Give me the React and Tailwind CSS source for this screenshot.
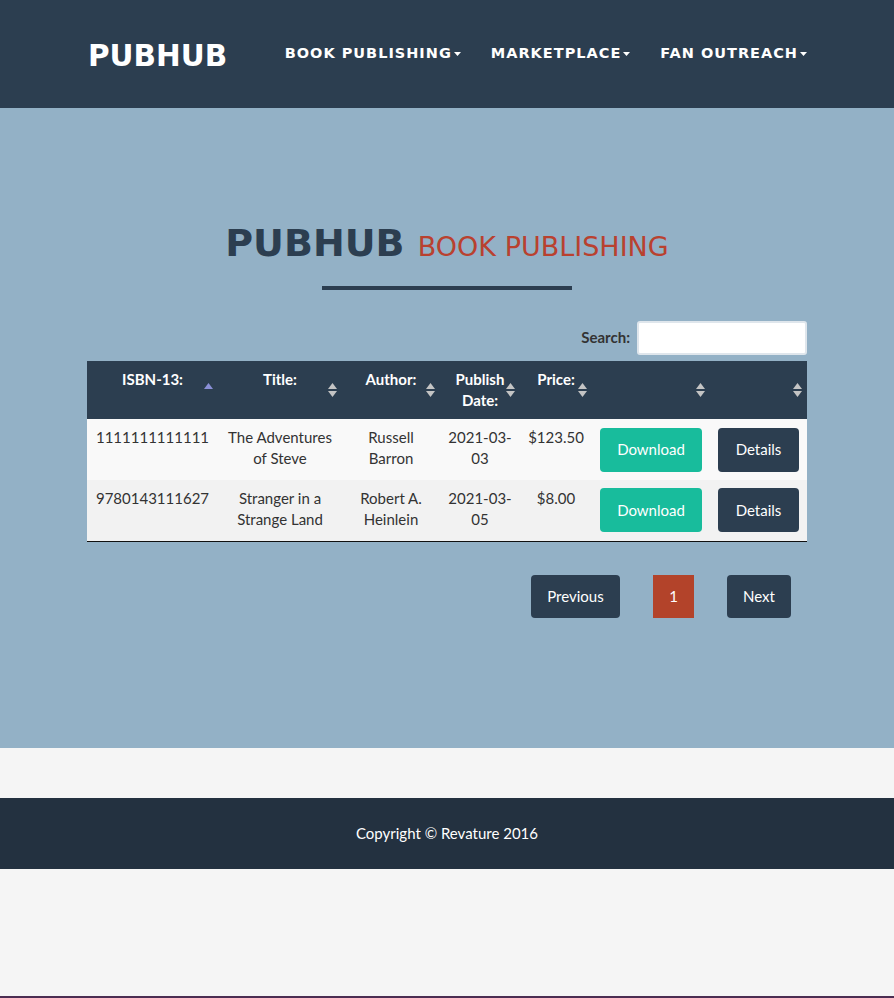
const books = [
  { isbn: '1111111111111', title: 'The Adventures of Steve', author: 'Russell Barron', date: '2021-03-03', price: '$123.50' },
  { isbn: '9780143111627', title: 'Stranger in a Strange Land', author: 'Robert A. Heinlein', date: '2021-03-05', price: '$8.00' },
];

const Caret = () => (
  <svg width="7" height="4" viewBox="0 0 7 4" className="ml-[2px] inline-block">
    <path d="M0 0h7L3.5 4z" fill="currentColor" />
  </svg>
);

const SortIcon = ({ active }) => (
  <svg width="9" height="14" viewBox="0 0 9 14" className="absolute right-[5px] top-[22px]">
    {active ? (
      <path d="M0 6L4.5 0L9 6z" fill="#8a8fd6" />
    ) : (
      <>
        <path d="M0 6L4.5 0L9 6z" fill="#c4c4c4" />
        <path d="M0 8L4.5 14L9 8z" fill="#c4c4c4" />
      </>
    )}
  </svg>
);

const headers = ['ISBN-13:', 'Title:', 'Author:', 'Publish Date:', 'Price:', '', ''];

export default function App() {
  return (
    <div className="min-h-[998px] flex flex-col bg-[#f5f5f5] font-['Lato',sans-serif] text-[15px] text-[#333]">
      {/* navbar */}
      <header className="h-[108px] bg-[#2c3e50]">
        <div className="w-[720px] mx-auto h-full flex items-center justify-between">
          <a className="pl-[1px] pt-[6px] text-[29.5px] font-bold text-white font-['DejaVu_Sans',sans-serif] leading-none">PUBHUB</a>
          <nav className="flex items-center gap-[30px] text-white font-bold text-[14.5px] tracking-[1px] font-['DejaVu_Sans',sans-serif]">
            <span className="flex items-center">BOOK PUBLISHING<Caret /></span>
            <span className="flex items-center">MARKETPLACE<Caret /></span>
            <span className="flex items-center">FAN OUTREACH<Caret /></span>
          </nav>
        </div>
      </header>

      {/* main */}
      <section className="h-[640px] bg-[#93b1c6] pt-[116px]">
        <div className="w-[720px] mx-auto flex flex-col items-center">
          <h1 className="text-[38px] leading-none font-['DejaVu_Sans',sans-serif] whitespace-nowrap">
            <span className="font-bold text-[#2c3e50]">PUBHUB </span>
            <span className="text-[27px] text-[#b9412f]">BOOK PUBLISHING</span>
          </h1>
          <div className="mt-[24px] w-[250px] h-[4px] bg-[#2c3e50]" />

          <div className="mt-[31px] self-end flex items-center gap-[7px]">
            <label className="font-bold text-[#333] -mt-[2px]">Search:</label>
            <input className="w-[170px] h-[34px] bg-white rounded-[3px] border-2 border-[#dfe6ec] outline-none" />
          </div>

          <table className="mt-[6px] w-[720px] table-fixed border-collapse border-b border-[#111]">
            <colgroup>
              <col className="w-[131px]" />
              <col className="w-[124px]" />
              <col className="w-[98px]" />
              <col className="w-[80px]" />
              <col className="w-[72px]" />
              <col className="w-[118px]" />
              <col className="w-[97px]" />
            </colgroup>
            <thead>
              <tr className="bg-[#2c3e50] text-white">
                {headers.map((h, i) => (
                  <th key={i} className="relative h-[57px] px-[8px] py-[8px] align-top text-center font-bold leading-[21px]">
                    {h}
                    <SortIcon active={i === 0} />
                  </th>
                ))}
              </tr>
            </thead>
            <tbody>
              {books.map((b, i) => (
                <tr key={b.isbn} className={i % 2 === 0 ? 'bg-[#f9f9f9]' : 'bg-[#f2f2f2]'}>
                  <td className="h-[61px] px-[8px] pt-[8px] align-top text-center leading-[21px]">{b.isbn}</td>
                  <td className="px-[8px] pt-[8px] align-top text-center leading-[21px]">{b.title}</td>
                  <td className="px-[8px] pt-[8px] align-top text-center leading-[21px]">{b.author}</td>
                  <td className="px-[8px] pt-[8px] align-top text-center leading-[21px]">{b.date}</td>
                  <td className="px-[8px] pt-[8px] align-top text-center leading-[21px]">{b.price}</td>
                  <td className="px-[8px] align-middle">
                    <button className="w-full h-[44px] rounded-[4px] bg-[#18bc9c] text-white">Download</button>
                  </td>
                  <td className="px-[8px] align-middle">
                    <button className="w-full h-[44px] rounded-[4px] bg-[#2c3e50] text-white">Details</button>
                  </td>
                </tr>
              ))}
            </tbody>
          </table>

          <div className="mt-[33px] self-end mr-[16px] flex items-center gap-[33px] text-white">
            <button className="w-[89px] h-[43px] rounded-[4px] bg-[#2c3e50]">Previous</button>
            <button className="w-[41px] h-[43px] bg-[#b3432a]">1</button>
            <button className="w-[64px] h-[43px] rounded-[4px] bg-[#2c3e50]">Next</button>
          </div>
        </div>
      </section>

      <div className="h-[50px]" />

      {/* footer */}
      <footer className="h-[71px] bg-[#233140] flex items-center justify-center text-white">
        Copyright © Revature 2016
      </footer>

      <div className="flex-1" />
      <div className="h-[2px] bg-[#4b2d52]" />
    </div>
  );
}
